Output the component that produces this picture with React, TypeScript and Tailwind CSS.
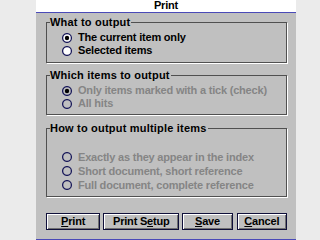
import React from "react";

function Radio({ checked, disabled }: { checked?: boolean; disabled?: boolean }) {
  return (
    <svg width="10" height="10" viewBox="0 0 10 10" className="shrink-0">
      <circle cx="5" cy="5" r="4.4" fill={disabled ? "#c0c0c0" : "#ffffff"} stroke="#1c1c5c" strokeWidth="1.3" />
      {checked && <circle cx="5" cy="5" r="2.2" fill="#000000" />}
    </svg>
  );
}

function Option({
  label,
  checked,
  disabled,
  h,
}: {
  label: string;
  checked?: boolean;
  disabled?: boolean;
  h: string;
}) {
  return (
    <div className={`flex items-center gap-[6px] pl-[15px] ${h}`}>
      <Radio checked={checked} disabled={disabled} />
      <span className={disabled ? "text-[#858585]" : "text-black"}>{label}</span>
    </div>
  );
}

function Group({
  title,
  className,
  children,
}: {
  title: string;
  className: string;
  children: React.ReactNode;
}) {
  return (
    <div className={`relative border border-[#505050] shadow-[1px_1px_0_#ffffff] ${className}`}>
      <span className="absolute left-[3px] top-[-7px] bg-[#c0c0c0] pr-px leading-[12px] tracking-[0.2px] text-black">
        {title}
      </span>
      {children}
    </div>
  );
}

function Btn({ w, children }: { w: string; children: React.ReactNode }) {
  return (
    <button
      className={`flex h-[17px] items-center justify-center border border-[#10103a] bg-[#c0c0c0] shadow-[inset_1px_1px_0_#ffffff,inset_-1px_-1px_0_#707070] leading-none text-black ${w}`}
    >
      {children}
    </button>
  );
}

export default function App() {
  return (
    <div className="flex h-[240px] w-[320px] bg-[#ebebeb] font-['Liberation_Sans',Arial,sans-serif] text-[11px] font-bold tracking-[-0.2px]">
      <div className="ml-[36px] flex h-[240px] w-[260px] flex-col border-b border-[#4a4ab8] bg-[#c0c0c0]">
        <div className="flex h-[13px] items-center justify-center border-b border-[#4a4ab8] bg-white pb-px text-black">
          Print
        </div>
        <div className="flex flex-col pl-[10px] pr-[9px]">
          <Group title="What to output" className="mt-[9px] h-[41px] pt-[8px]">
            <Option h="h-[13px]" label="The current item only" checked />
            <Option h="h-[13px]" label="Selected items" />
          </Group>
          <Group title="Which items to output" className="mt-[12px] h-[40px] pt-[8px]">
            <Option h="h-[13px]" label="Only items marked with a tick (check)" checked disabled />
            <Option h="h-[13px]" label="All hits" disabled />
          </Group>
          <Group title="How to output multiple items" className="mt-[13px] h-[69px] pt-[21px]">
            <Option h="h-[14px]" label="Exactly as they appear in the index" disabled />
            <Option h="h-[14px]" label="Short document, short reference" disabled />
            <Option h="h-[14px]" label="Full document, complete reference" disabled />
          </Group>
          <div className="mt-[16px] flex gap-[3px]">
            <Btn w="w-[55px]">
              <span className="underline">P</span>rint
            </Btn>
            <Btn w="w-[77px]">
              Print S<span className="underline">e</span>tup
            </Btn>
            <Btn w="w-[51px]">
              <span className="underline">S</span>ave
            </Btn>
            <Btn w="w-[51px] ml-[1px]">
              <span className="underline">C</span>ancel
            </Btn>
          </div>
        </div>
      </div>
    </div>
  );
}
